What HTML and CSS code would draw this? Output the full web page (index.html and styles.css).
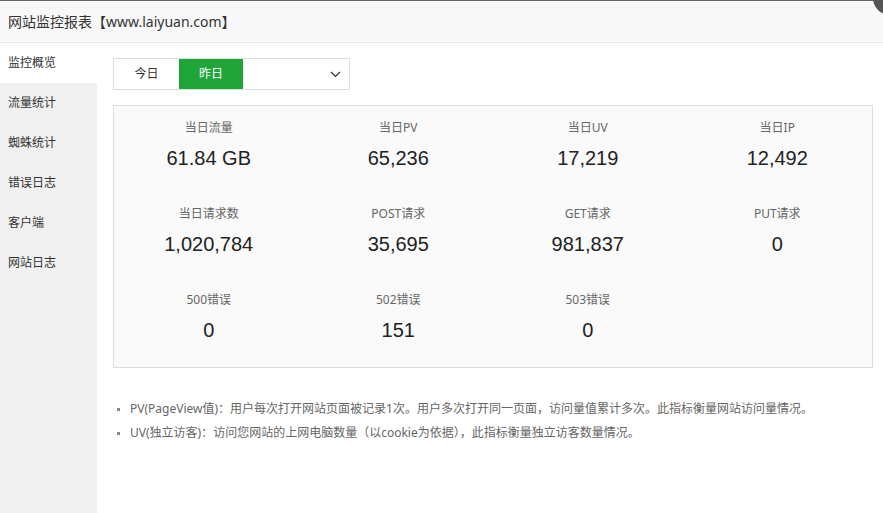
FILE: index.html
```html
<!DOCTYPE html>
<html lang="zh-CN">
<head>
<meta charset="utf-8">
<title>网站监控报表</title>
<link rel="stylesheet" href="styles.css">
</head>
<body>
<div class="layer">
  <div class="layer-title">网站监控报表【www.laiyuan.com】</div>
  <span class="layer-close"></span>
  <div class="layer-body">
    <ul class="side">
      <li class="side-item active">监控概览</li>
      <li class="side-item">流量统计</li>
      <li class="side-item">蜘蛛统计</li>
      <li class="side-item">错误日志</li>
      <li class="side-item">客户端</li>
      <li class="side-item">网站日志</li>
    </ul>
    <div class="main">
      <div class="tabs">
        <span class="tab">今日</span>
        <span class="tab on">昨日</span>
        <span class="tab-select">
          <svg width="11" height="7" viewBox="0 0 11 7"><path d="M1 1 L5.5 5.5 L10 1" fill="none" stroke="#333" stroke-width="1.2"/></svg>
        </span>
      </div>
      <div class="stats">
        <div class="cell"><div class="lbl">当日流量</div><div class="val">61.84 GB</div></div>
        <div class="cell"><div class="lbl">当日PV</div><div class="val">65,236</div></div>
        <div class="cell"><div class="lbl">当日UV</div><div class="val">17,219</div></div>
        <div class="cell"><div class="lbl">当日IP</div><div class="val">12,492</div></div>
        <div class="cell"><div class="lbl">当日请求数</div><div class="val">1,020,784</div></div>
        <div class="cell"><div class="lbl">POST请求</div><div class="val">35,695</div></div>
        <div class="cell"><div class="lbl">GET请求</div><div class="val">981,837</div></div>
        <div class="cell"><div class="lbl">PUT请求</div><div class="val">0</div></div>
        <div class="cell"><div class="lbl">500错误</div><div class="val">0</div></div>
        <div class="cell"><div class="lbl">502错误</div><div class="val">151</div></div>
        <div class="cell"><div class="lbl">503错误</div><div class="val">0</div></div>
      </div>
      <ul class="notes">
        <li>PV(PageView值)：用户每次打开网站页面被记录1次。用户多次打开同一页面，访问量值累计多次。此指标衡量网站访问量情况。</li>
        <li>UV(独立访客)：访问您网站的上网电脑数量（以cookie为依据），此指标衡量独立访客数量情况。</li>
      </ul>
    </div>
  </div>
</div>
</body>
</html>
```

FILE: styles.css
```css
* { box-sizing: border-box; }
html, body { margin: 0; padding: 0; height: 100%; }
body {
  background: #fff;
  font-family: "Noto Sans", "Noto Sans CJK SC", sans-serif;
  color: #333;
  overflow: hidden;
}
.layer {
  position: relative;
  height: 513px;
  display: flex;
  flex-direction: column;
  border-top: 1px solid #666;
}
.layer-title {
  height: 42px;
  line-height: 41px;
  padding-left: 8px;
  font-size: 14px;
  color: #333;
  background: #f8f8f8;
  border-bottom: 1px solid #e8e8e8;
}
.layer-close {
  position: absolute;
  right: -24px;
  top: -20px;
  width: 34px;
  height: 34px;
  border-radius: 50%;
  background: #555;
}
.layer-body {
  flex: 1;
  display: flex;
}
.side {
  list-style: none;
  margin: 0;
  padding: 0;
  width: 97px;
  background: #f0f0f0;
}
.side-item {
  height: 40px;
  line-height: 40px;
  padding-left: 8px;
  font-size: 12px;
  color: #333;
}
.side-item.active { background: #fff; }
.main {
  flex: 1;
  padding: 15px 10px 0 16px;
}
.tabs {
  display: flex;
  width: 237px;
  height: 32px;
  border: 1px solid #ddd;
}
.tab {
  width: 65px;
  line-height: 30px;
  text-align: center;
  font-size: 12px;
  color: #333;
}
.tab.on {
  width: 64px;
  background: #20a53a;
  color: #fff;
}
.tab-select {
  flex: 1;
  display: flex;
  align-items: center;
  justify-content: flex-end;
  padding-right: 8px;
}
.stats {
  margin-top: 15px;
  display: grid;
  grid-template-columns: repeat(4, 1fr);
  background: #fafafa;
  border: 1px solid #ddd;
  padding-bottom: 3px;
}
.cell {
  height: 86px;
  padding-top: 12px;
  text-align: center;
}
.lbl {
  font-size: 12px;
  line-height: 20px;
  color: #666;
}
.val {
  margin-top: 10px;
  font-family: "Liberation Sans", Arial, sans-serif;
  font-size: 20px;
  line-height: 20px;
  color: #222;
}
.notes {
  list-style: none;
  margin: 29px 0 0;
  padding: 0 0 0 4px;
}
.notes li {
  position: relative;
  padding-left: 13px;
  font-size: 12px;
  line-height: 24px;
  color: #666;
}
.notes li::before {
  content: "";
  position: absolute;
  left: 0;
  top: 11px;
  width: 3px;
  height: 3px;
  background: #888;
}
```
